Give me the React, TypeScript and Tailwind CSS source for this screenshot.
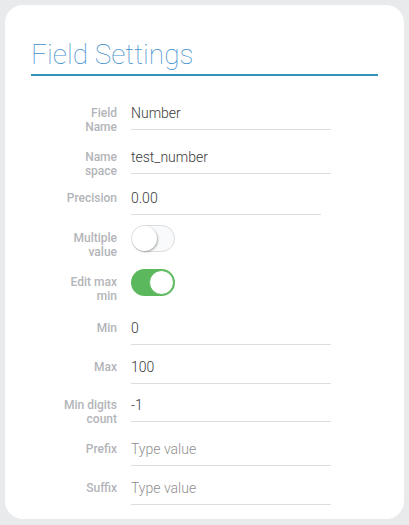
import React from "react";

type Row =
  | { label: string[]; kind: "input"; value?: string; placeholder?: string; mt: string; w?: string }
  | { label: string[]; kind: "toggle"; on: boolean; mt: string };

const rows: Row[] = [
  { label: ["Field", "Name"], kind: "input", value: "Number", mt: "mt-[30px]" },
  { label: ["Name", "space"], kind: "input", value: "test_number", mt: "mt-[16px]" },
  { label: ["Precision"], kind: "input", value: "0.00", mt: "mt-[13px]", w: "w-[190px]" },
  { label: ["Multiple", "value"], kind: "toggle", on: false, mt: "mt-[16px]" },
  { label: ["Edit max", "min"], kind: "toggle", on: true, mt: "mt-[16px]" },
  { label: ["Min"], kind: "input", value: "0", mt: "mt-[18px]" },
  { label: ["Max"], kind: "input", value: "100", mt: "mt-[15px]" },
  { label: ["Min digits", "count"], kind: "input", value: "-1", mt: "mt-[14px]" },
  { label: ["Prefix"], kind: "input", placeholder: "Type value", mt: "mt-[16px]" },
  { label: ["Suffix"], kind: "input", placeholder: "Type value", mt: "mt-[15px]" },
];

function Toggle({ on }: { on: boolean }) {
  return (
    <div
      className={`-mt-[6px] w-[44px] h-[27px] rounded-full flex items-center ${
        on ? "bg-[#5cb85c] justify-end" : "bg-[#f9fafb] border border-[#dcdcdc] justify-start"
      }`}
    >
      <div
        className={`w-[25px] h-[25px] rounded-full bg-white ${
          on ? "border border-[#5cb85c] mr-px" : "shadow-[1px_1px_2px_rgba(0,0,0,0.3)]"
        }`}
      />
    </div>
  );
}

export default function App() {
  return (
    <div className="bg-[#e9eaeb] w-[409px] h-[525px] p-[5px] font-['Roboto',sans-serif]">
      <div className="bg-white rounded-[18px] h-[514px] px-[26px] pt-[36px]">
        {/* Title */}
        <div className="border-b-2 border-[#3593bf] pb-[5px]">
          <h1 className="text-[28px] leading-[28px] font-thin text-[#3f8fcb]">Field Settings</h1>
        </div>

        {/* Fields */}
        <div className="flex flex-col">
          {rows.map((row) => (
            <div key={row.label.join(" ")} className={`flex items-start gap-[14px] ${row.mt}`}>
              <div className="w-[86px] text-right text-[12px] leading-[14px] font-medium text-[#b3b5b9]">
                {row.label.map((l) => (
                  <div key={l}>{l}</div>
                ))}
              </div>
              {row.kind === "toggle" ? (
                <Toggle on={row.on} />
              ) : (
                <div
                  className={`${row.w ?? "w-[200px]"} border-b border-[#dddddd] pb-[9px] text-[14px] leading-[14px] font-light ${
                    row.value ? "text-[#3a3a3a]" : "text-[#8f8f8f]"
                  }`}
                >
                  {row.value ?? row.placeholder}
                </div>
              )}
            </div>
          ))}
        </div>
      </div>
    </div>
  );
}
